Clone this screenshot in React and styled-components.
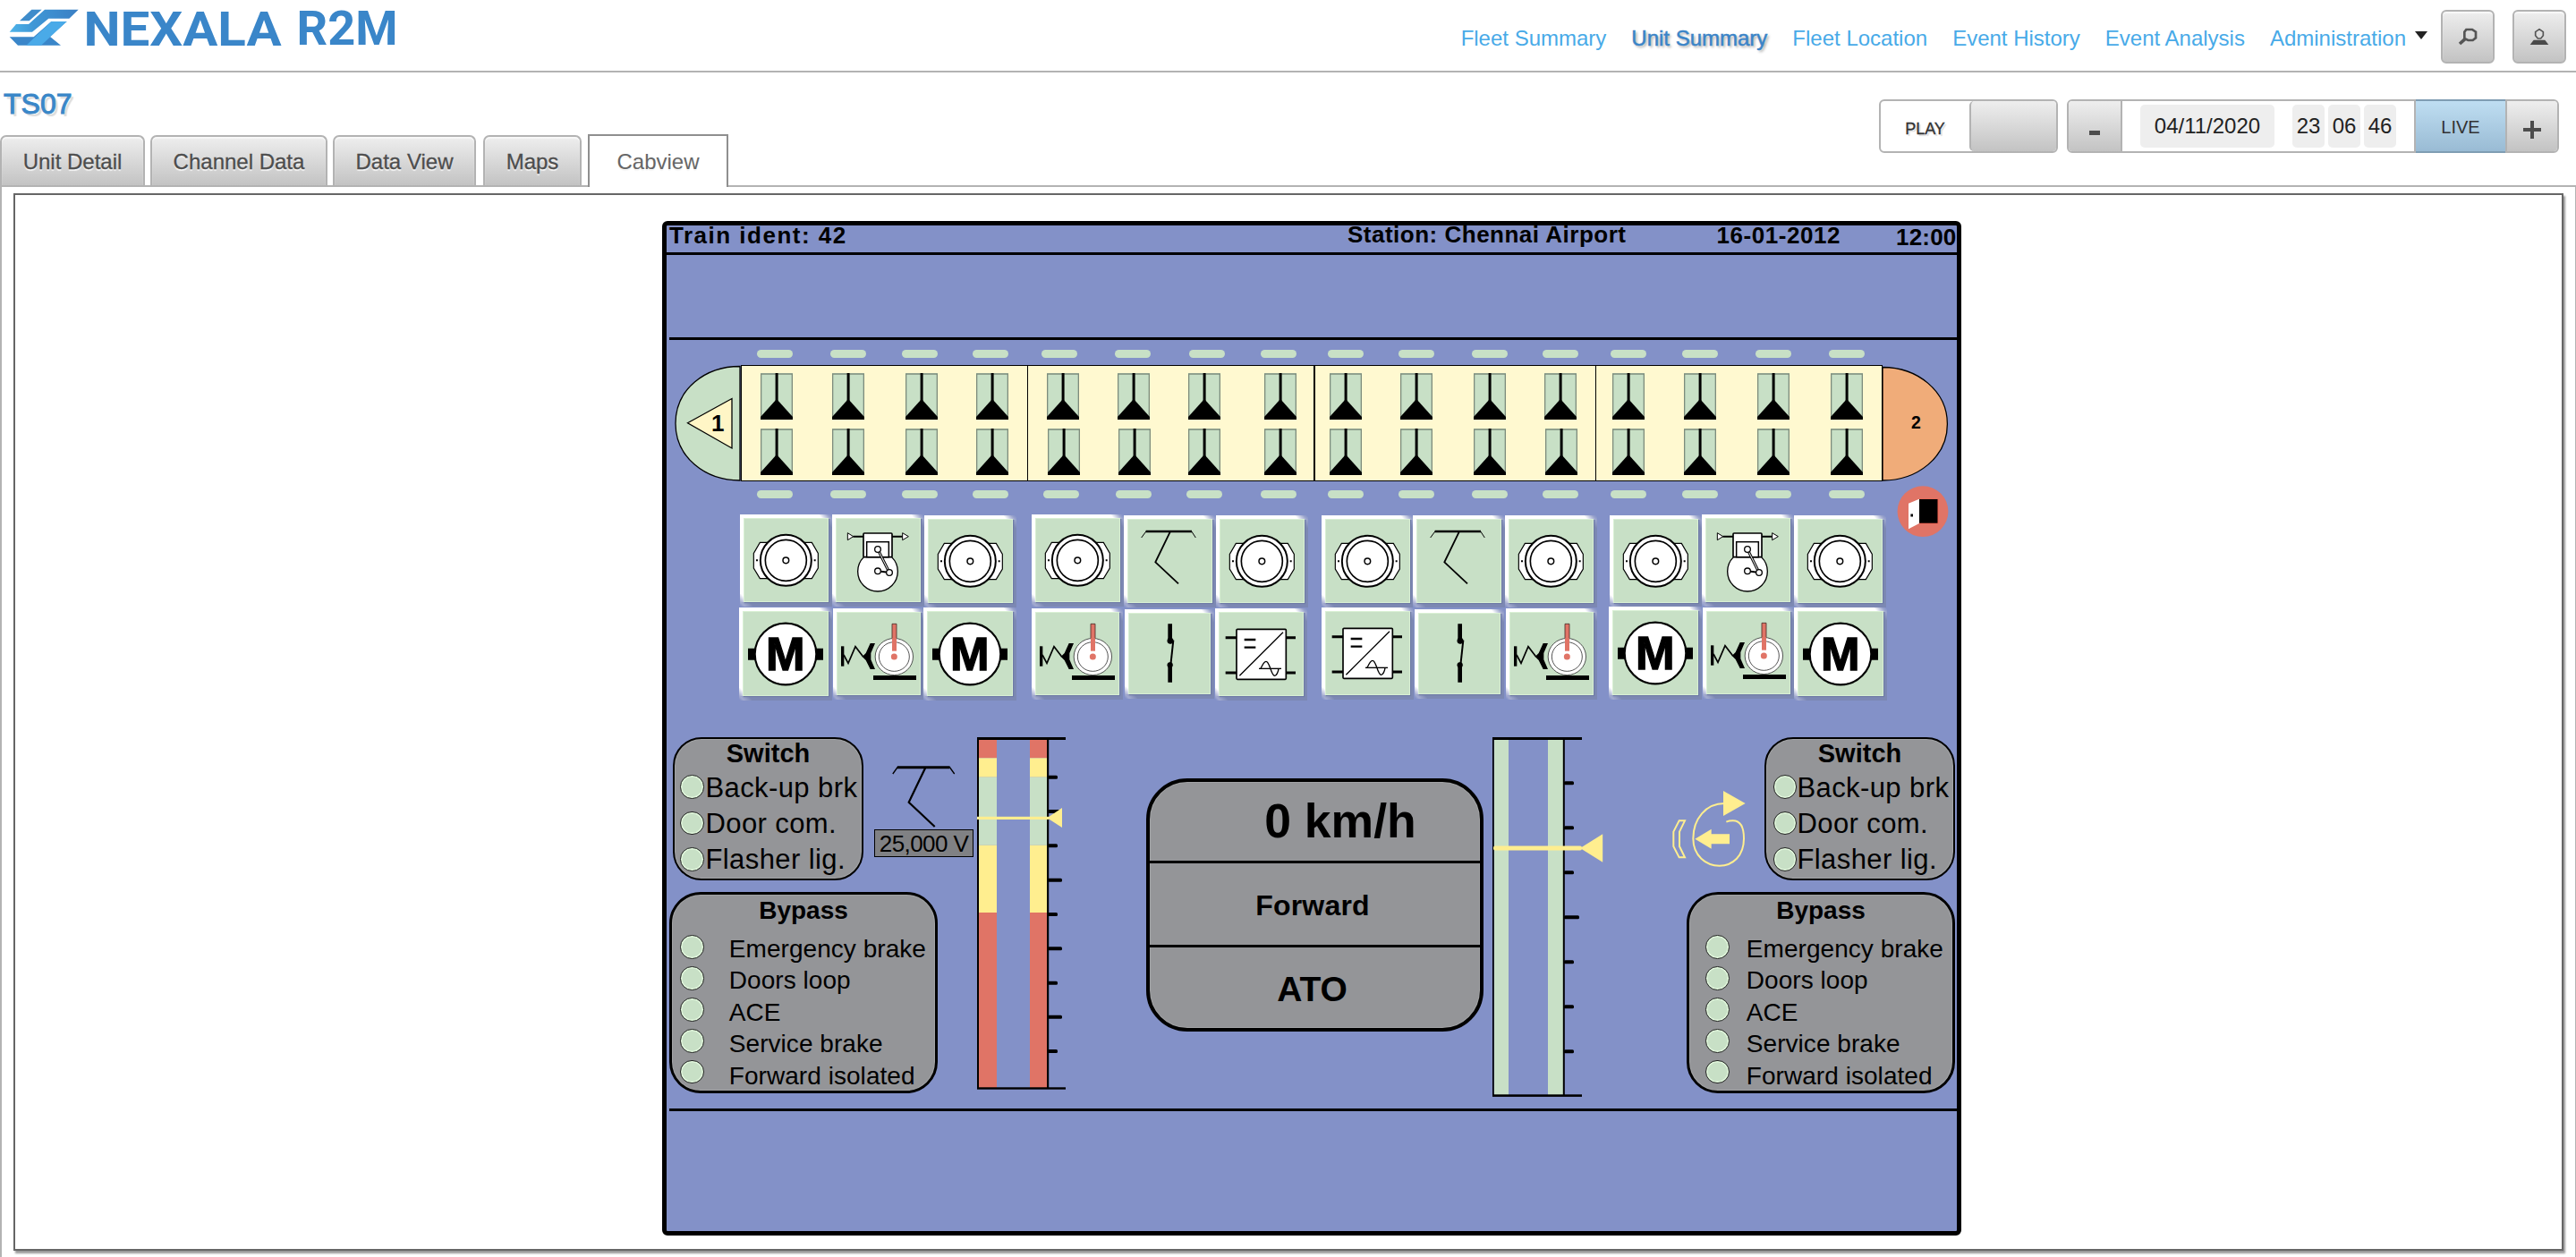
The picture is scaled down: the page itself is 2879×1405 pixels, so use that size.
import React from "react";
import styled, { createGlobalStyle, css } from "styled-components";

const C = {
  blue: "#8391c8",
  green: "#c8e0c6",
  cream: "#fff9d0",
  yellow: "#ffee8f",
  red: "#e07466",
  orange: "#f0ac79",
  grey: "#949598",
  line: "#b3b3b3",
};

const Global = createGlobalStyle`
  *, *::before, *::after { box-sizing: border-box; }
  body {
    margin: 0;
    background: #fff;
    font-family: "Liberation Sans", Arial, sans-serif;
    overflow: hidden;
  }
  svg { display: block; flex: none; }
`;

/* ---------- page chrome ---------- */

const Page = styled.div`
  width: 2879px;
  height: 1405px;
  display: flex;
  flex-direction: column;
  overflow: hidden;
`;

const Header = styled.header`
  height: 81px;
  flex: none;
  display: flex;
  align-items: flex-start;
  justify-content: space-between;
  border-bottom: 2px solid ${C.line};
  padding: 0 11px 0 0;
`;

const HeaderRight = styled.div`
  display: flex;
  align-items: flex-start;
  padding-top: 9px;
`;

const Nav = styled.nav`
  display: flex;
  gap: 28px;
  padding-top: 22px;
  margin-right: 15px;
  font-size: 24px;
  line-height: 24px;
  white-space: nowrap;
`;

const NavLink = styled.a`
  display: flex;
  color: #48aae8;
  ${(p) =>
    p.$active &&
    css`
      color: #3a84c8;
      -webkit-text-stroke: 0.5px #3a84c8;
      text-shadow: 2px 2px 3px rgba(0, 0, 0, 0.35);
    `}
`;

const Caret = styled.span`
  width: 0;
  height: 0;
  margin: 4px 0 0 10px;
  border: 7px solid transparent;
  border-top: 9px solid #222;
  border-bottom: 0;
`;

const greyFace = css`
  background: linear-gradient(#eeeeee, #c3c3c3);
`;

const IconButton = styled.button`
  width: 60px;
  height: 60px;
  margin: 2px 0 0 ${(p) => p.$gap || 0}px;
  padding: 0;
  border: 2px solid ${C.line};
  border-radius: 6px;
  ${greyFace}
  box-shadow: inset 0 2px 1px #f8f8f8;
  display: flex;
  align-items: center;
  justify-content: center;
`;

const TitleBar = styled.div`
  height: 126px;
  flex: none;
  display: flex;
  justify-content: space-between;
`;

const TitleSide = styled.div`
  display: flex;
  flex-direction: column;
  justify-content: space-between;
`;

const UnitTitle = styled.h1`
  margin: 18px 0 0 4px;
  font-size: 32px;
  line-height: 34px;
  font-weight: 400;
  color: #3a87c8;
  -webkit-text-stroke: 1px #3a87c8;
  text-shadow: 3px 3px 1px #dcdcdc;
`;

const Tabs = styled.div`
  display: flex;
  align-items: flex-end;
`;

const Tab = styled.div`
  width: ${(p) => p.$w}px;
  height: 56px;
  margin-left: ${(p) => p.$gap}px;
  border: 2px solid ${C.line};
  border-bottom: 0;
  border-radius: 7px 7px 0 0;
  ${greyFace}
  box-shadow: inset 0 2px 1px #f8f8f8;
  color: #4d4d4d;
  -webkit-text-stroke: 0.3px #4d4d4d;
  font-size: 24px;
  line-height: 55px;
  text-align: center;
  text-shadow: 0 2px 1px #f5f5f5;
  white-space: nowrap;
  ${(p) =>
    p.$active &&
    css`
      position: relative;
      height: 59px;
      margin-bottom: -2px;
      background: #fff;
      border-color: #8f8f8f;
      border-radius: 0;
      box-shadow: none;
      color: #666;
      line-height: 57px;
      -webkit-text-stroke: 0;
    `}
`;

const Controls = styled.div`
  display: flex;
  gap: 10px;
  padding: 30px 19px 0 0;
`;

const Group = styled.div`
  display: flex;
  width: ${(p) => p.$w}px;
  height: 60px;
  border: 2px solid ${C.line};
  border-radius: 6px;
  background: #fff;
`;

const PlayLabel = styled.div`
  width: 99px;
  line-height: 62px;
  font-size: 18px;
  text-align: center;
  color: #333;
  -webkit-text-stroke: 0.3px #333;
  text-shadow: 2px 2px 1px #ddd;
`;

const Knob = styled.div`
  flex: 1;
  border-left: 2px solid ${C.line};
  border-radius: 5px 4px 4px 5px;
  ${greyFace}
`;

const Step = styled.div`
  width: ${(p) => p.$w}px;
  flex: none;
  ${greyFace}
  border-radius: ${(p) => (p.$end ? "0 4px 4px 0" : "4px 0 0 4px")};
  border-${(p) => (p.$end ? "left" : "right")}: 2px solid ${C.line};
  display: flex;
`;

const DateRow = styled.div`
  flex: 1;
  display: flex;
  gap: 4px;
  padding: 4px 0 0 20px;
`;

const Field = styled.div`
  width: ${(p) => p.$w}px;
  height: 48px;
  margin-right: ${(p) => p.$after || 0}px;
  border-radius: 5px;
  background: #eee;
  color: #222;
  font-size: 24px;
  line-height: 47px;
  text-align: center;
`;

const Live = styled.div`
  width: 102px;
  height: 60px;
  margin-top: -2px;
  flex: none;
  border-left: 2px solid ${C.line};
  background: linear-gradient(#c0dff3, #98bad3);
  box-shadow: inset 0 2px #7f9db3, inset 0 -2px #7f9db3;
  color: #333;
  font-size: 20px;
  line-height: 62px;
  text-align: center;
`;

const Body = styled.main`
  flex: 1;
  border: 2px solid ${C.line};
  border-right-width: 1px;
  border-bottom: 0;
  padding: 7px 13px 7px 13px;
  display: flex;
`;

const Panel = styled.section`
  flex: 1;
  border: 2px solid #666;
  box-shadow: 2px 3px 2px #999;
  padding: 29px 0 0 723px;
`;

/* ---------- cab display ---------- */

const Cab = styled.div`
  position: relative;
  width: 1452px;
  height: 1134px;
  border: 5px solid #000;
  border-radius: 6px;
  background: ${C.blue};
  color: #000;
`;

const CabHeader = styled.div`
  height: 33px;
  display: flex;
  padding-left: 3px;
  border-bottom: 3px solid #000;
  font-size: 26px;
  line-height: 22px;
  font-weight: 700;
  white-space: nowrap;
`;

const HeaderText = styled.span`
  width: ${(p) => p.$w}px;
  margin-top: ${(p) => p.$top || 0}px;
  letter-spacing: ${(p) => p.$spacing || 0}px;
`;

const Message = styled.div`
  height: 95px;
  margin-left: 3px;
  border-bottom: 3px solid #000;
`;

const LightRow = styled.div`
  display: flex;
  margin-top: ${(p) => p.$top}px;
`;

const Light = styled.span`
  width: ${(p) => p.$w}px;
  height: 9px;
  margin-left: ${(p) => p.$gap}px;
  border-radius: 5px;
  background: ${C.green};
`;

const Train = styled.div`
  display: flex;
  height: 130px;
  margin: 8px 0 0 9px;
`;

const Car = styled.div`
  width: ${(p) => p.$w}px;
  border: 1px solid #000;
  border-left-width: ${(p) => p.$left}px;
  border-right-width: ${(p) => (p.$last ? 1 : 0)}px;
  background: ${C.cream};
  padding-top: 8px;
`;

const DoorRow = styled.div`
  display: flex;
  margin-bottom: 10px;
`;

const DoorSlot = styled.div`
  margin-left: ${(p) => p.$gap}px;
`;

const TileDeck = styled.div`
  display: flex;
  height: 208px;
  margin: 18px 0 0 81px;
`;

const TileGroup = styled.div`
  width: ${(p) => p.$w}px;
  display: flex;
  flex-direction: column;
`;

const TileRow = styled.div`
  display: flex;
  align-items: flex-start;
  height: 103px;
`;

const Tile = styled.div`
  position: relative;
  flex: none;
  width: ${(p) => p.$s}px;
  height: ${(p) => p.$s}px;
  margin: ${(p) => p.$top}px 0 0 ${(p) => p.$gap}px;
  padding: 4px 4px 5px 4px;
  background:
    linear-gradient(225deg, ${C.blue} 1px, #99a3cc 4px, rgba(255, 255, 255, 0) 11px) top right / 14px 14px no-repeat,
    linear-gradient(45deg, ${C.blue} 1px, #a3abd0 4px, rgba(255, 255, 255, 0) 11px) bottom left / 14px 14px no-repeat,
    linear-gradient(45deg, #fff 50%, #7c88b3 50.5%) top right / 5px 5px no-repeat,
    linear-gradient(45deg, #fff 50%, #7c88b3 50.5%) bottom left / 5px 5px no-repeat,
    linear-gradient(#fff, #fff) left top / 5px 100% no-repeat,
    linear-gradient(#fff, #fff) left top / 100% 4px no-repeat,
    #7c88b3;
`;

const TileFace = styled.div`
  width: 100%;
  height: 100%;
  background: ${C.green};
  border: 1px solid #d9f0d4;
  box-shadow: 1px 1px 1px #6f7ba6;
`;

const TileIcon = styled.svg`
  position: absolute;
  inset: 0;
  width: 100%;
  height: 100%;
`;

const DoorBadge = styled.svg`
  position: absolute;
  left: 1375px;
  top: 291px;
`;

const Lower = styled.div`
  display: flex;
  align-items: flex-start;
  height: 415px;
  margin-top: 41px;
`;

const Cluster = styled.div`
  display: flex;
  flex-direction: column;
  width: ${(p) => p.$w}px;
  margin-left: ${(p) => p.$gap}px;
  align-items: ${(p) => (p.$right ? "flex-end" : "flex-start")};
`;

const ClusterTop = styled.div`
  display: flex;
  gap: ${(p) => p.$between || 0}px;
  height: 173px;
  margin-left: ${(p) => p.$gap || 0}px;
`;

const box = css`
  border: ${(p) => p.$b}px solid #000;
  background: ${C.grey};
  box-shadow: inset 0 0 0 1px #a2a3a5;
`;

const StatusBox = styled.div`
  ${box}
  width: ${(p) => p.$w}px;
  height: ${(p) => p.$h}px;
  border-radius: ${(p) => p.$r}px;
`;

const BoxTitle = styled.div`
  height: ${(p) => p.$h}px;
  font-size: ${(p) => p.$f}px;
  line-height: ${(p) => p.$lh}px;
  font-weight: 700;
  text-align: center;
`;

const StatusBody = styled.div`
  display: flex;
  align-items: flex-start;
`;

const Lamps = styled.div`
  display: flex;
  flex-direction: column;
  gap: ${(p) => p.$gap}px;
  padding: ${(p) => p.$top}px 0 0 ${(p) => p.$left}px;
`;

const Lamp = styled.span`
  width: 26.5px;
  height: 26.5px;
  border-radius: 50%;
  border: 1px solid #222;
  background: ${C.green};
  box-shadow: inset 0 0 0 1.5px #e2f8dd;
`;

const Labels = styled.div`
  margin: 1px 0 0 ${(p) => p.$gap}px;
  font-size: ${(p) => p.$f}px;
  line-height: ${(p) => p.$lh}px;
  letter-spacing: ${(p) => p.$spacing}px;
  white-space: nowrap;
`;

const VoltageColumn = styled.div`
  display: flex;
  flex-direction: column;
  align-items: center;
  margin: 31px 0 0 12px;
`;

const Voltage = styled.div`
  width: 111px;
  height: 31px;
  border: 1.5px solid #000;
  background: #808184;
  font-size: 26px;
  line-height: 30px;
  letter-spacing: -0.6px;
  text-align: center;
  white-space: nowrap;
`;

const SpeedBox = styled.div`
  ${box}
  width: 377px;
  height: 283px;
  margin: 46px 10px 0 90px;
  border-radius: 46px;
  display: flex;
  flex-direction: column;
`;

const SpeedCell = styled.div`
  height: ${(p) => p.$h}px;
  border-bottom: ${(p) => (p.$last ? 0 : 3)}px solid #000;
  padding: ${(p) => p.$top}px ${(p) => p.$right || 0}px 0 ${(p) => p.$left || 0}px;
  font-size: ${(p) => p.$f}px;
  line-height: 88px;
  letter-spacing: ${(p) => p.$spacing || 0}px;
  font-weight: 700;
  text-align: center;
`;

const BottomRule = styled.div`
  height: 3px;
  margin-left: 3px;
  background: #000;
`;

/* ---------- drawings ---------- */

function Logo() {
  return (
    <svg width="460" height="70" viewBox="0 0 460 70" overflow="visible">
      <defs>
        <linearGradient id="band" x1="0" x2="1">
          <stop offset="0" stopColor="#4fb4ea" />
          <stop offset="0.35" stopColor="#3f97d6" />
          <stop offset="1" stopColor="#3a7fc4" />
        </linearGradient>
      </defs>
      <g transform="scale(0.33333)">
        <path d="M106 32H140L98 70H66Z" fill="#3f8ccb" />
        <path d="M150 32H263L232 62H163L108 107H32L54 81H96Z" fill="url(#band)" />
        <path d="M32 124H113L172 72H224L167 122L204 152H60Z" fill="#3a86c9" />
        <path d="M172 72H224L138 152H88Z" fill="#4aaae8" />
      </g>
      <g fill="#3a86c9" fontFamily="Roboto, sans-serif" fontWeight="700" fontSize="54">
        <text x="93.5" y="50.5" textLength="221" lengthAdjust="spacingAndGlyphs">NEXALA</text>
        <text x="331.5" y="50" textLength="113" lengthAdjust="spacingAndGlyphs">R2M</text>
      </g>
    </svg>
  );
}

function SearchIcon() {
  return (
    <svg width="22" height="20" viewBox="0 0 66 60" fill="none" stroke="#555">
      <path d="M28 6H48L60 14V34L50 42H34L22 36V14Z" strokeWidth="8" />
      <path d="M24 38L6 54" strokeWidth="11" />
    </svg>
  );
}

function UserIcon() {
  return (
    <svg width="22" height="20" viewBox="0 0 66 60">
      <path d="M33 5L46 14V26L38 36H28L20 26V14Z" fill="#ddd" stroke="#555" strokeWidth="5" />
      <path d="M14 41H52L64 57H2Z" fill="#4a4a4a" />
    </svg>
  );
}

function StepIcon({ plus }) {
  return plus ? (
    <svg width="57" height="56" viewBox="0 0 57 56" fill="#4d4d4d">
      <path d="M18 30H38V34H18Z M26 22H30V42H26Z" />
    </svg>
  ) : (
    <svg width="58" height="56" viewBox="0 0 58 56" fill="#4d4d4d">
      <path d="M23 33H35V38H23Z" />
    </svg>
  );
}

function DoorIcon() {
  return (
    <svg width="36" height="52" viewBox="0 0 36 52">
      <rect width="36" height="52" fill={C.green} />
      <path d="M0.5 52V1H35.5V52" fill="none" stroke="#7d8c7c" strokeWidth="1.6" />
      <rect x="16.6" y="0" width="3" height="32" />
      <path d="M18 29L36 49V52H0V49Z" />
    </svg>
  );
}

function NoseLeft() {
  return (
    <svg width="74" height="130" viewBox="754 408 74 130">
      <path d="M827 409.5C788 409.5 755 435 755 473.3C755 511 788 537 827 537Z" fill={C.green} stroke="#000" strokeWidth="1.3" />
      <path d="M768.5 472.7L818 445.5V501Z" fill="#fff6c6" stroke="#000" strokeWidth="1.3" />
      <text x="795" y="481.5" fontSize="26" fontWeight="700" fontFamily="Liberation Sans, sans-serif">1</text>
    </svg>
  );
}

function NoseRight() {
  return (
    <svg width="74" height="130" viewBox="2104 408 74 130">
      <path d="M2104 410.5C2143 410.5 2176.4 437 2176.4 474C2176.4 511 2143 537 2104 537Z" fill={C.orange} stroke="#000" strokeWidth="1.3" />
      <text x="2136" y="479" fontSize="19.5" fontWeight="700" fontFamily="Liberation Sans, sans-serif">2</text>
    </svg>
  );
}

const ICONS = {
  disc: (
    <g fill="#fff" stroke="#000">
      <path d="M92 94H67L46 130V180L67 215H92Z M216 94H241L262 130V180L241 215H216Z" strokeWidth="3.5" />
      <circle cx="154" cy="154" r="85.5" strokeWidth="6" />
      <circle cx="154" cy="154" r="69" strokeWidth="5" />
      <circle cx="154" cy="154" r="10" strokeWidth="4.5" />
      <path d="M54 154h6M248 154h6" strokeWidth="6" />
    </g>
  ),
  compressor: (
    <g fill="#fff" stroke="#000">
      <path d="M70 74H105M201 74H236" strokeWidth="6" />
      <path d="M52 62L71 74L52 86Z M236 62L256 74L236 86Z" strokeWidth="3" />
      <circle cx="153" cy="191" r="67" strokeWidth="4" />
      <rect x="105" y="63" width="96" height="80" rx="3" strokeWidth="5" />
      <rect x="116" y="92" width="74" height="51" strokeWidth="4.5" />
      <path d="M153 117L192 195" strokeWidth="9" />
      <path d="M153 117L192 195" strokeWidth="3" stroke="#fff" />
      <path d="M153 190L192 195" strokeWidth="6" />
      <circle cx="153" cy="117" r="10" strokeWidth="4" />
      <circle cx="153" cy="190" r="10" strokeWidth="4" />
      <circle cx="192" cy="195" r="10" strokeWidth="4" />
    </g>
  ),
  panto: (
    <g fill="none" stroke="#000">
      <path d="M74 54H228" strokeWidth="8" />
      <path d="M76 52L59 75M226 52L241 75" strokeWidth="3" />
      <path d="M155 56L106 157L183 229" strokeWidth="5.5" />
    </g>
  ),
  motor: (
    <g>
      <path d="M30 137H282V176H30Z" />
      <circle cx="156" cy="156" r="103" fill="#fff" stroke="#000" strokeWidth="6.5" />
      <text x="155.5" y="209" fontSize="157" fontWeight="700" textAnchor="middle" stroke="#000" strokeWidth="4" fontFamily="Liberation Sans, sans-serif">M</text>
    </g>
  ),
  wheel: (
    <g>
      <path d="M125 117H141L127 150V172L141 204H125L110 174L98 162L110 150Z" />
      <rect x="27" y="127" width="10" height="67" />
      <path d="M36 156L51 184L75 128L101 162" fill="none" stroke="#000" strokeWidth="5" />
      <ellipse cx="205" cy="162" rx="63.5" ry="61.5" fill="#fff" stroke="#333" strokeWidth="2.5" />
      <ellipse cx="205" cy="162" rx="51" ry="49" fill="#fff" stroke="#333" strokeWidth="2.5" />
      <rect x="198" y="52" width="15" height="91" fill={C.red} />
      <path d="M198 100V52H213V100" fill="none" stroke="#4b2b27" strokeWidth="2.5" />
      <circle cx="205" cy="162" r="10.5" fill={C.red} />
      <rect x="135" y="225" width="144" height="15" />
    </g>
  ),
  contactor: (
    <g stroke="#000">
      <path d="M152 49V105M152 187V245" strokeWidth="14" />
      <circle cx="153" cy="106" r="10" />
      <circle cx="152" cy="187" r="9" />
      <path d="M163 104L154 187" strokeWidth="6" />
    </g>
  ),
  converter: (
    <g fill="none" stroke="#000">
      <path d="M35 98H72M35 216H72M238 98H270M238 216H270" strokeWidth="9" />
      <rect x="72" y="70" width="166" height="168" fill="#fff" rx="3" strokeWidth="5" />
      <path d="M82 226L228 80" strokeWidth="4" />
      <path d="M98 105H136M98 131H136" strokeWidth="7" />
      <path d="M147 202H222" strokeWidth="4" />
      <path d="M153 202C160 186 164 178 171 178C184 178 187 226 200 226C206 226 212 212 213 202" strokeWidth="4" />
    </g>
  ),
};

function Pantograph() {
  return (
    <svg width="72" height="72" viewBox="997 855 72 72" fill="none" stroke="#000">
      <path d="M1003 857.8H1061.3" strokeWidth="3" />
      <path d="M1003.5 857L997.8 865M1061 857L1066.7 865" strokeWidth="1.3" />
      <path d="M1034.3 858L1015.7 896.7L1044.7 924" strokeWidth="2.2" />
    </svg>
  );
}

function VoltageGauge() {
  const ticks = [868.7, 907, 945.3, 983.7, 1022, 1060.3, 1098.7, 1136.7, 1175];
  const bands = [
    [827, 847.3, C.red],
    [847.3, 868.7, C.yellow],
    [868.7, 944.7, C.green],
    [944.7, 1020, C.yellow],
    [1020, 1216, C.red],
  ];
  return (
    <svg width="99" height="394" viewBox="1092 824 99 394">
      {bands.map(([a, b, fill]) => (
        <g key={a} fill={fill}>
          <rect x="1094" y={a} width="20" height={b - a} />
          <rect x="1151" y={a} width="19.5" height={b - a} />
        </g>
      ))}
      <g fill="#000">
        <rect x="1092" y="824" width="99" height="3" />
        <rect x="1092" y="1215.3" width="99" height="2.4" />
        <rect x="1092" y="824" width="2" height="393" />
        <rect x="1170" y="824" width="2.2" height="393" />
        {ticks.map((y, i) => (
          <rect key={y} x="1171" y={y - 2} width={i % 2 ? 16 : 11} height="4" rx="1.5" />
        ))}
      </g>
      <g fill={C.yellow}>
        <rect x="1092" y="912.8" width="80" height="3.2" />
        <path d="M1170.3 914.3L1187 903V925Z" />
      </g>
    </svg>
  );
}

function EffortGauge() {
  const ticks = [875.3, 925.3, 975.3, 1025.3, 1075.3, 1125.3, 1175.3];
  return (
    <svg width="125" height="402" viewBox="1668 824 125 402">
      <g fill={C.green}>
        <rect x="1670" y="827" width="16" height="397" />
        <rect x="1730" y="827" width="17" height="397" />
      </g>
      <g fill="#000">
        <rect x="1668" y="824" width="100" height="3" />
        <rect x="1668" y="1223.3" width="100" height="2.6" />
        <rect x="1668" y="824" width="1.7" height="401" />
        <rect x="1746.8" y="824" width="2" height="401" />
        {ticks.map((y, i) => (
          <rect key={y} x="1748" y={y - 2} width={i === 3 ? 17 : 11} height="4" rx="1.5" />
        ))}
      </g>
      <g fill={C.yellow}>
        <rect x="1669" y="945.5" width="99" height="5" rx="2" />
        <path d="M1766 948L1791.2 932.3V963.8Z" />
      </g>
    </svg>
  );
}

function BrakeIcon() {
  return (
    <svg width="84" height="145" viewBox="144 72 252 435" fill="none" stroke={C.yellow} strokeWidth="6">
      <path d="M170 352H189L171 389V438L189 475H170L151 438V389Z" />
      <path d="M322 294C260 294 217 345 217 412C217 470 260 503 305 503C350 503 387 470 387 412C387 375 378 352 350 352C342 352 335 353 328 356" />
      <g fill={C.yellow} stroke="none">
        <path d="M318 252L392 294L318 336Z" />
        <path d="M223 413L278 380V397H339V430H278V446Z" />
      </g>
    </svg>
  );
}

/* ---------- data ---------- */

const NAV = ["Fleet Summary", "Unit Summary", "Fleet Location", "Event History", "Event Analysis", "Administration"];

const TABS = [
  ["Unit Detail", 162, 0],
  ["Channel Data", 198, 6],
  ["Data View", 160, 6],
  ["Maps", 110, 8],
  ["Cabview", 157, 7],
];

const TOP_LIGHTS = [846, 928, 1008, 1087, 1164, 1246, 1329, 1409, 1484, 1563, 1645, 1724, 1800, 1880, 1962, 2044];
const BOTTOM_LIGHTS = [846, 928, 1008, 1087, 1166, 1247, 1326, 1409, 1484, 1563, 1645, 1724, 1800, 1880, 1962, 2044];

const CARS = [
  { x: 828, w: 320, left: 1, rows: [[850, 930, 1012, 1091], [850, 930, 1012, 1091]] },
  { x: 1148, w: 320, left: 1, rows: [[1170, 1249, 1328, 1413], [1171, 1250, 1328, 1413]] },
  { x: 1468, w: 315, left: 2, rows: [[1486, 1565, 1647, 1726], [1486, 1565, 1647, 1727]] },
  { x: 1783, w: 321, left: 1, rows: [[1802, 1882, 1964, 2046], [1802, 1882, 1964, 2046]] },
];

/* each tile: icon, size, offset from the row's top, space before it */
const DECK = [
  {
    w: 327,
    rows: [
      [["disc", 103, 0, 1], ["compressor", 103, 0, 0], ["disc", 103, 1, 0]],
      [["motor", 104, 1, 0], ["wheel", 102, 2, 1], ["motor", 104, 1, -1]],
    ],
  },
  {
    w: 324,
    rows: [
      [["disc", 103, 0, 0], ["panto", 103, 1, 0], ["disc", 103, 1, 0]],
      [["wheel", 102, 2, 0], ["contactor", 100, 3, 2], ["converter", 103, 2, 1]],
    ],
  },
  {
    w: 321,
    rows: [
      [["disc", 103, 1, 0], ["panto", 103, 1, -1], ["disc", 103, 1, 0]],
      [["converter", 103, 1, 0], ["contactor", 100, 3, 1], ["wheel", 102, 2, 2]],
    ],
  },
  {
    w: 320,
    rows: [
      [["disc", 103, 1, 1], ["compressor", 103, 0, 0], ["disc", 103, 1, 0]],
      [["motor", 104, 0, 0], ["wheel", 102, 1, 1], ["motor", 104, 1, 0]],
    ],
  },
];

const SWITCHES = ["Back-up brk", "Door com.", "Flasher lig."];
const BYPASSES = ["Emergency brake", "Doors loop", "ACE", "Service brake", "Forward isolated"];

/* ---------- composed parts ---------- */

function Lights({ xs, top }) {
  return (
    <LightRow $top={top}>
      {xs.map((x, i) => (
        <Light key={x} $w={40} $gap={i ? x - xs[i - 1] - 40 : x - 745} />
      ))}
    </LightRow>
  );
}

function CarView({ car, last }) {
  return (
    <Car $w={car.w} $left={car.left} $last={last}>
      {car.rows.map((xs, r) => (
        <DoorRow key={r}>
          {xs.map((x, i) => (
            <DoorSlot key={x} $gap={i ? x - xs[i - 1] - 36 : x - car.x - car.left}>
              <DoorIcon />
            </DoorSlot>
          ))}
        </DoorRow>
      ))}
    </Car>
  );
}

function SwitchBox({ lampLeft }) {
  return (
    <StatusBox $w={213} $h={160} $r={32} $b={2}>
      <BoxTitle $h={34} $f={29} $lh={33}>Switch</BoxTitle>
      <StatusBody>
        <Lamps $gap={14} $top={6} $left={lampLeft}>
          {SWITCHES.map((s) => <Lamp key={s} />)}
        </Lamps>
        <Labels $gap={34.5 - lampLeft - 26.5} $f={31} $lh={40} $spacing={0.4}>
          {SWITCHES.map((s) => <div key={s}>{s}</div>)}
        </Labels>
      </StatusBody>
    </StatusBox>
  );
}

function BypassBox({ lampLeft }) {
  return (
    <StatusBox $w={300} $h={225} $r={35} $b={3}>
      <BoxTitle $h={41.6} $f={28} $lh={36}>Bypass</BoxTitle>
      <StatusBody>
        <Lamps $gap={8.4} $top={3.8} $left={lampLeft}>
          {BYPASSES.map((s) => <Lamp key={s} />)}
        </Lamps>
        <Labels $gap={63.8 - lampLeft - 26.5} $f={28} $lh={35.5} $spacing={0.05}>
          {BYPASSES.map((s) => <div key={s}>{s}</div>)}
        </Labels>
      </StatusBody>
    </StatusBox>
  );
}

function CabView() {
  return (
    <Cab>
      <CabHeader>
        <HeaderText $w={758} $spacing={1.5}>Train ident: 42</HeaderText>
        <HeaderText $w={412.5} $top={-1} $spacing={0.5}>Station: Chennai Airport</HeaderText>
        <HeaderText $w={200.5} $spacing={0.55}>16-01-2012</HeaderText>
        <HeaderText $w={68} $top={2} $spacing={0.2}>12:00</HeaderText>
      </CabHeader>
      <Message />
      <Lights xs={TOP_LIGHTS} top={11} />
      <Train>
        <NoseLeft />
        {CARS.map((c, i) => <CarView key={c.x} car={c} last={i === 3} />)}
        <NoseRight />
      </Train>
      <Lights xs={BOTTOM_LIGHTS} top={10} />
      <TileDeck>
        {DECK.map((g, gi) => (
          <TileGroup key={gi} $w={g.w}>
            {g.rows.map((row, ri) => (
              <TileRow key={ri}>
                {row.map(([icon, s, top, gap], i) => (
                  <Tile key={i} $s={s} $top={top} $gap={gap}>
                    <TileFace />
                    <TileIcon viewBox={`0 0 ${s * 3} ${s * 3}`}>{ICONS[icon]}</TileIcon>
                  </Tile>
                ))}
              </TileRow>
            ))}
          </TileGroup>
        ))}
      </TileDeck>
      <DoorBadge width="58" height="58" viewBox="2120 543 58 58">
        <circle cx="2149" cy="571.7" r="28.4" fill={C.red} />
        <rect x="2144.5" y="557.5" width="22" height="28" fill="#f0604f" />
        <rect x="2145" y="558" width="20.5" height="26.7" />
        <path d="M2133 562.7L2145 557.7V585L2133 591.3Z" fill="#fff" />
        <rect x="2135.4" y="574.5" width="2.6" height="3" />
      </DoorBadge>
      <Lower>
        <Cluster $w={344} $gap={3}>
          <ClusterTop $gap={4}>
            <SwitchBox lampLeft={6.3} />
            <VoltageColumn>
              <Pantograph />
              <Voltage>25,000 V</Voltage>
            </VoltageColumn>
          </ClusterTop>
          <BypassBox lampLeft={9} />
        </Cluster>
        <VoltageGauge />
        <SpeedBox $b={4}>
          <SpeedCell $h={91} $f={53.5} $top={0} $left={57}>0 km/h</SpeedCell>
          <SpeedCell $h={94} $f={32} $top={3} $right={5} $spacing={0.2}>Forward</SpeedCell>
          <SpeedCell $h={90} $f={39} $top={3} $right={6} $last>ATO</SpeedCell>
        </SpeedBox>
        <EffortGauge />
        <Cluster $w={317} $gap={75} $right>
          <ClusterTop $between={20}>
            <BrakeIcon />
            <SwitchBox lampLeft={7.7} />
          </ClusterTop>
          <BypassBox lampLeft={18.3} />
        </Cluster>
      </Lower>
      <BottomRule />
    </Cab>
  );
}

export default function App() {
  return (
    <>
      <Global />
      <Page>
        <Header>
          <Logo />
          <HeaderRight>
            <Nav>
              {NAV.map((n) => (
                <NavLink key={n} $active={n === "Unit Summary"}>
                  {n}
                  {n === "Administration" && <Caret />}
                </NavLink>
              ))}
            </Nav>
            <IconButton><SearchIcon /></IconButton>
            <IconButton $gap={20}><UserIcon /></IconButton>
          </HeaderRight>
        </Header>
        <TitleBar>
          <TitleSide>
            <UnitTitle>TS07</UnitTitle>
            <Tabs>
              {TABS.map(([t, w, gap]) => (
                <Tab key={t} $w={w} $gap={gap} $active={t === "Cabview"}>{t}</Tab>
              ))}
            </Tabs>
          </TitleSide>
          <Controls>
            <Group $w={200}>
              <PlayLabel>PLAY</PlayLabel>
              <Knob />
            </Group>
            <Group $w={550}>
              <Step $w={60}><StepIcon /></Step>
              <DateRow>
                <Field $w={150} $after={16}>04/11/2020</Field>
                <Field $w={36}>23</Field>
                <Field $w={36}>06</Field>
                <Field $w={36}>46</Field>
              </DateRow>
              <Live>LIVE</Live>
              <Step $w={58} $end><StepIcon plus /></Step>
            </Group>
          </Controls>
        </TitleBar>
        <Body>
          <Panel>
            <CabView />
          </Panel>
        </Body>
      </Page>
    </>
  );
}
